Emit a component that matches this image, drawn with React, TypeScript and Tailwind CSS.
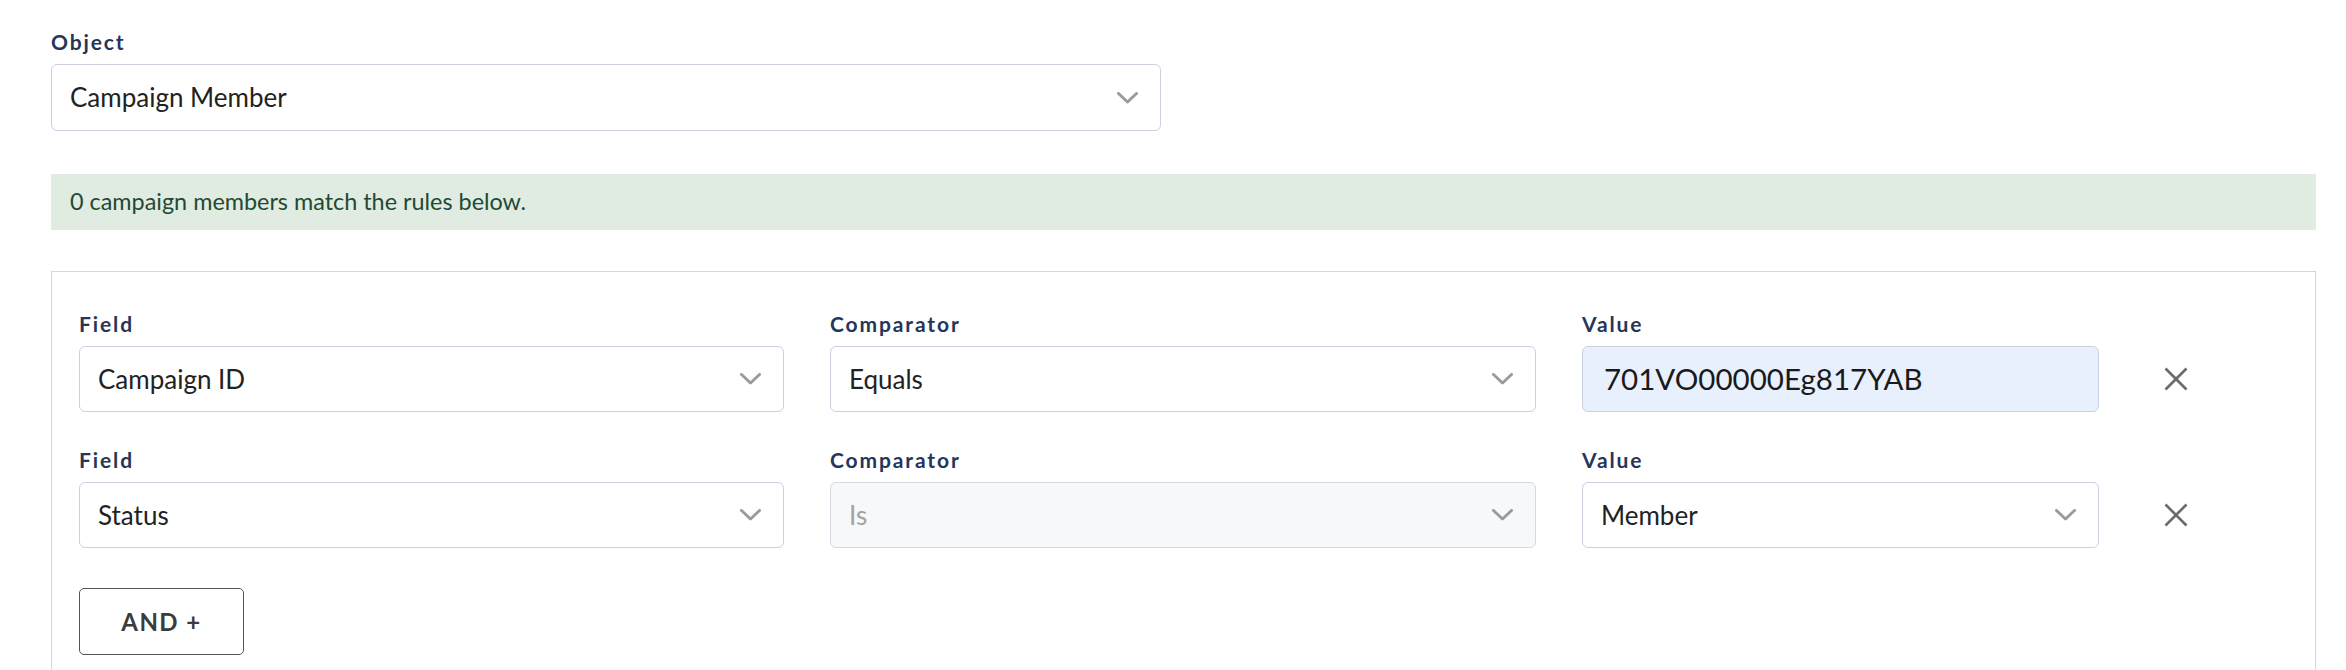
/** Segment rules editor: object picker, match count and rule rows. */

function Chevron() {
  return (
    <svg width="21" height="12" viewBox="0 0 21 12" fill="none" className="shrink-0">
      <polyline points="1.5,1.5 10.5,10 19.5,1.5" stroke="#9b9b9b" strokeWidth="3" strokeLinecap="round" strokeLinejoin="round" />
    </svg>
  );
}

function CloseIcon() {
  return (
    <svg width="24" height="24" viewBox="0 0 24 24" fill="none">
      <line x1="1.5" y1="1.5" x2="22.5" y2="22.5" stroke="#6b6b6b" strokeWidth="2.6" />
      <line x1="22.5" y1="1.5" x2="1.5" y2="22.5" stroke="#6b6b6b" strokeWidth="2.6" />
    </svg>
  );
}

function Label({ children }: { children: string }) {
  return <div className="text-[21px] leading-[24px] font-bold tracking-[0.09em] text-[#263659] mb-[10px]">{children}</div>;
}

interface SelectProps {
  value: string;
  disabled?: boolean;
  className?: string;
}

function Select({ value, disabled, className = "" }: SelectProps) {
  return (
    <div
      className={`flex items-center justify-between h-[66px] pl-[18px] pr-[22px] rounded-[6px] border ${
        disabled ? "bg-[#f7f8fa] border-[#d5d8e0] text-[#a3a3a3]" : "bg-white border-[#ccd1e2] text-[#222222]"
      } ${className}`}
    >
      <span className="text-[26px]">{value}</span>
      <Chevron />
    </div>
  );
}

export default function App() {
  return (
    <div className="bg-white min-h-screen pl-[51px] pr-[30px] pt-[30px]" style={{ fontFamily: "Lato, 'Noto Sans', sans-serif" }}>
      <Label>Object</Label>
      <Select value="Campaign Member" className="w-[1110px] h-[67px]" />

      <div className="mt-[43px] h-[56px] bg-[#e0ebe2] flex items-center pl-[19px] text-[23.4px] text-[#1f4a33]">
        0 campaign members match the rules below.
      </div>

      <div className="mt-[41px] border border-[#d6d6d6] border-b-0 pt-[40px] pl-[27px] pb-[20px]">
        <div className="flex flex-col gap-[36px]">
          {[
            { field: "Campaign ID", comp: "Equals", compDisabled: false, value: "701VO00000Eg817YAB", input: true },
            { field: "Status", comp: "Is", compDisabled: true, value: "Member", input: false },
          ].map((r) => (
            <div key={r.field} className="flex items-end">
              <div className="w-[705px]">
                <Label>Field</Label>
                <Select value={r.field} />
              </div>
              <div className="w-[706px] ml-[46px]">
                <Label>Comparator</Label>
                <Select value={r.comp} disabled={r.compDisabled} />
              </div>
              <div className="w-[517px] ml-[46px]">
                <Label>Value</Label>
                {r.input ? (
                  <div className="h-[66px] flex items-center pl-[21px] rounded-[6px] border border-[#c9d1e4] bg-[#e8f0fe] text-[29.5px] text-[#1a1a1a]">
                    {r.value}
                  </div>
                ) : (
                  <Select value={r.value} />
                )}
              </div>
              <div className="h-[66px] flex items-center ml-[65px]">
                <CloseIcon />
              </div>
            </div>
          ))}
        </div>

        <button className="mt-[40px] w-[165px] h-[67px] rounded-[5px] border border-[#555555] bg-white text-[24px] font-bold tracking-[0.06em] text-[#3b3b3b]">
          AND +
        </button>
      </div>
    </div>
  );
}
